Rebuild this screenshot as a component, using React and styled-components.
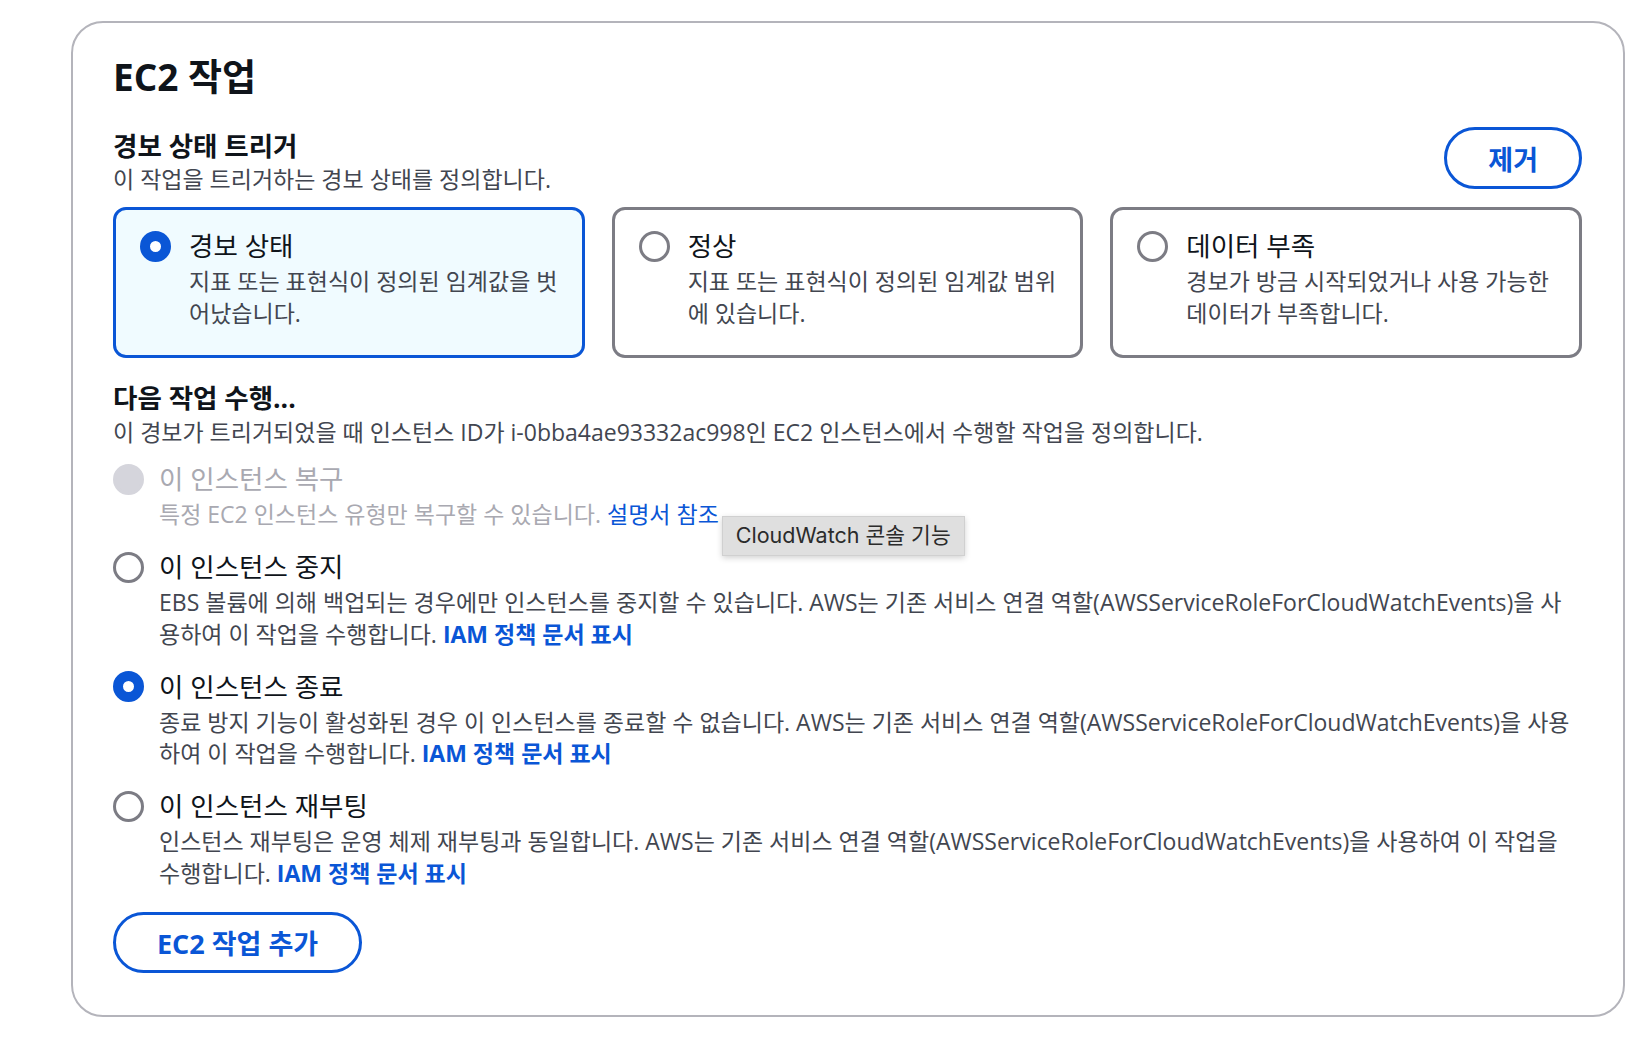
import styled, { createGlobalStyle } from 'styled-components';

const GlobalStyle = createGlobalStyle`
    body {
        margin: 0;
        background: #ffffff;
        font-family: "Open Sans", "Noto Sans CJK KR", sans-serif;
        color: #0f141a;
    }
`;

const Page = styled.div`
    padding: 21px 19px 23px 71px;
`;

const Card = styled.section`
    border: 2px solid #b4b4bb;
    border-radius: 32px;
    padding: 34px 41px 42px 40px;
`;

const Title = styled.h2`
    margin: 0;
    font-size: 37px;
    line-height: 40px;
    font-weight: 700;
    color: #0f141a;
`;

const HeaderRow = styled.div`
    margin-top: 31px;
    display: flex;
    justify-content: space-between;
    align-items: flex-start;
`;

const SectionLabel = styled.div`
    font-size: 26.5px;
    line-height: 36px;
    font-weight: 700;
    color: #0f141a;
    margin-top: ${(p) => p.$top || 0}px;
`;

const SectionDesc = styled.div`
    font-size: 23px;
    line-height: 31px;
    color: #424650;
    white-space: nowrap;
`;

const PillButton = styled.button`
    font-family: inherit;
    background: #ffffff;
    border: 3px solid #0a56d6;
    border-radius: 40px;
    color: #0a56d6;
    font-size: 27px;
    font-weight: 700;
    height: ${(p) => p.$height}px;
    padding: 0 41px;
    cursor: pointer;
    margin-top: ${(p) => p.$top || 0}px;
`;

const TileGrid = styled.div`
    margin-top: 12px;
    display: grid;
    grid-template-columns: repeat(3, 1fr);
    gap: 27px;
`;

const Tile = styled.div`
    border: 3px solid ${(p) => (p.$selected ? '#0a56d6' : '#7c7c84')};
    background: ${(p) => (p.$selected ? '#f0fbff' : '#ffffff')};
    border-radius: 13px;
    padding: 16px 24px 26px 24px;
    display: flex;
    gap: 18px;
    align-items: flex-start;
`;

const Radio = styled.span`
    flex: none;
    box-sizing: border-box;
    width: 31px;
    height: 31px;
    border-radius: 50%;
    margin-top: 4.5px;
    background: ${(p) => (p.$checked ? '#ffffff' : p.$disabled ? '#d5d5dc' : '#ffffff')};
    border: ${(p) =>
        p.$checked
            ? '10.5px solid #0a56d6'
            : p.$disabled
            ? '3px solid #d5d5dc'
            : '3px solid #7c7c84'};
`;

const TextCol = styled.div`
    display: flex;
    flex-direction: column;
`;

const ItemLabel = styled.div`
    font-size: 26.5px;
    line-height: 40px;
    color: ${(p) => (p.$disabled ? '#a9a9b1' : '#0f141a')};
`;

const ItemDesc = styled.div`
    font-size: 23px;
    line-height: 31.5px;
    white-space: nowrap;
    color: ${(p) => (p.$disabled ? '#a9a9b1' : '#424650')};
`;

const ActionDesc = styled(SectionDesc)`
    line-height: 32px;
`;

const OptionList = styled.div`
    margin-top: 11px;
    display: flex;
    flex-direction: column;
    gap: 16.5px;
`;

const Option = styled.div`
    display: flex;
    gap: 15px;
    align-items: flex-start;
`;

const Link = styled.a`
    position: relative;
    color: #0a56d6;
    font-weight: ${(p) => (p.$strong ? 700 : 400)};
    text-decoration: none;
    cursor: pointer;
`;

const Tooltip = styled.span`
    position: absolute;
    left: calc(100% + 3px);
    top: 18px;
    height: 38px;
    display: flex;
    align-items: center;
    padding: 0 13px;
    white-space: nowrap;
    font-family: Inter, "Noto Sans CJK KR", sans-serif;
    font-size: 21.5px;
    font-weight: 400;
    color: #2b2b2b;
    background: #dfdfdf;
    border: 1px solid #d0d0d0;
    box-shadow: 0 2px 6px rgba(0, 0, 0, 0.18);
`;

const Footer = styled.div`
    margin-top: 23px;
`;

const tiles = [
    { label: '경보 상태', lines: ['지표 또는 표현식이 정의된 임계값을 벗', '어났습니다.'], selected: true },
    { label: '정상', lines: ['지표 또는 표현식이 정의된 임계값 범위', '에 있습니다.'] },
    { label: '데이터 부족', lines: ['경보가 방금 시작되었거나 사용 가능한', '데이터가 부족합니다.'] },
];

const IamLink = () => <Link $strong>IAM 정책 문서 표시</Link>;

const App = () => (
    <Page>
        <GlobalStyle />
        <Card>
            <Title>EC2 작업</Title>
            <HeaderRow>
                <div>
                    <SectionLabel>경보 상태 트리거</SectionLabel>
                    <SectionDesc>이 작업을 트리거하는 경보 상태를 정의합니다.</SectionDesc>
                </div>
                <PillButton $height={62} $top={-1}>제거</PillButton>
            </HeaderRow>
            <TileGrid>
                {tiles.map((t) => (
                    <Tile key={t.label} $selected={t.selected}>
                        <Radio $checked={t.selected} />
                        <TextCol>
                            <ItemLabel>{t.label}</ItemLabel>
                            {t.lines.map((l) => (
                                <ItemDesc key={l}>{l}</ItemDesc>
                            ))}
                        </TextCol>
                    </Tile>
                ))}
            </TileGrid>

            <SectionLabel $top={22}>다음 작업 수행...</SectionLabel>
            <ActionDesc>
                이 경보가 트리거되었을 때 인스턴스 ID가 i-0bba4ae93332ac998인 EC2 인스턴스에서 수행할 작업을 정의합니다.
            </ActionDesc>

            <OptionList>
                <Option>
                    <Radio $disabled />
                    <TextCol>
                        <ItemLabel $disabled>이 인스턴스 복구</ItemLabel>
                        <ItemDesc $disabled>
                            특정 EC2 인스턴스 유형만 복구할 수 있습니다.{' '}
                            <Link>
                                설명서 참조
                                <Tooltip>CloudWatch 콘솔 기능</Tooltip>
                            </Link>
                        </ItemDesc>
                    </TextCol>
                </Option>
                <Option>
                    <Radio />
                    <TextCol>
                        <ItemLabel>이 인스턴스 중지</ItemLabel>
                        <ItemDesc>
                            EBS 볼륨에 의해 백업되는 경우에만 인스턴스를 중지할 수 있습니다. AWS는 기존 서비스 연결 역할(AWSServiceRoleForCloudWatchEvents)을 사
                        </ItemDesc>
                        <ItemDesc>
                            용하여 이 작업을 수행합니다. <IamLink />
                        </ItemDesc>
                    </TextCol>
                </Option>
                <Option>
                    <Radio $checked />
                    <TextCol>
                        <ItemLabel>이 인스턴스 종료</ItemLabel>
                        <ItemDesc>
                            종료 방지 기능이 활성화된 경우 이 인스턴스를 종료할 수 없습니다. AWS는 기존 서비스 연결 역할(AWSServiceRoleForCloudWatchEvents)을 사용
                        </ItemDesc>
                        <ItemDesc>
                            하여 이 작업을 수행합니다. <IamLink />
                        </ItemDesc>
                    </TextCol>
                </Option>
                <Option>
                    <Radio />
                    <TextCol>
                        <ItemLabel>이 인스턴스 재부팅</ItemLabel>
                        <ItemDesc>
                            인스턴스 재부팅은 운영 체제 재부팅과 동일합니다. AWS는 기존 서비스 연결 역할(AWSServiceRoleForCloudWatchEvents)을 사용하여 이 작업을
                        </ItemDesc>
                        <ItemDesc>
                            수행합니다. <IamLink />
                        </ItemDesc>
                    </TextCol>
                </Option>
            </OptionList>

            <Footer>
                <PillButton $height={61}>EC2 작업 추가</PillButton>
            </Footer>
        </Card>
    </Page>
);

export default App;
